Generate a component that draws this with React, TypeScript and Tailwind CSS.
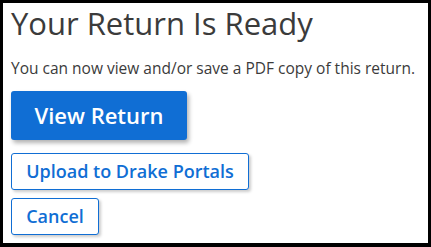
export default function App() {
  return (
    <div
      className="box-border flex h-[247px] w-[431px] flex-col border-t-[3px] border-r-[3px] border-b-[4px] border-l-[3px] border-black bg-white pl-[8px] text-[#3b3b3b]"
      style={{ fontFamily: '"Open Sans", sans-serif' }}
    >
      <h1 className="text-[31px] leading-[40px] font-normal">Your Return Is Ready</h1>
      <p className="mt-[15px] text-[15.5px] leading-[21px]">
        You can now view and/or save a PDF copy of this return.
      </p>
      <div className="mt-[12px] flex flex-col items-start">
        <button className="h-[49px] w-[176px] rounded-[3px] bg-[#106ed4] text-[22px] font-semibold text-white shadow-[2px_3px_4px_rgba(0,0,0,0.3)]">
          View Return
        </button>
        <button className="mt-[13px] h-[37px] w-[238px] rounded-[3px] border border-[#106ed4] bg-white text-[18px] font-semibold text-[#106ed4] shadow-[2px_2px_3px_rgba(0,0,0,0.2)]">
          Upload to Drake Portals
        </button>
        <button className="mt-[8px] h-[37px] w-[88px] rounded-[3px] border border-[#106ed4] bg-white text-[18px] font-semibold text-[#106ed4] shadow-[2px_2px_3px_rgba(0,0,0,0.2)]">
          Cancel
        </button>
      </div>
    </div>
  );
}
